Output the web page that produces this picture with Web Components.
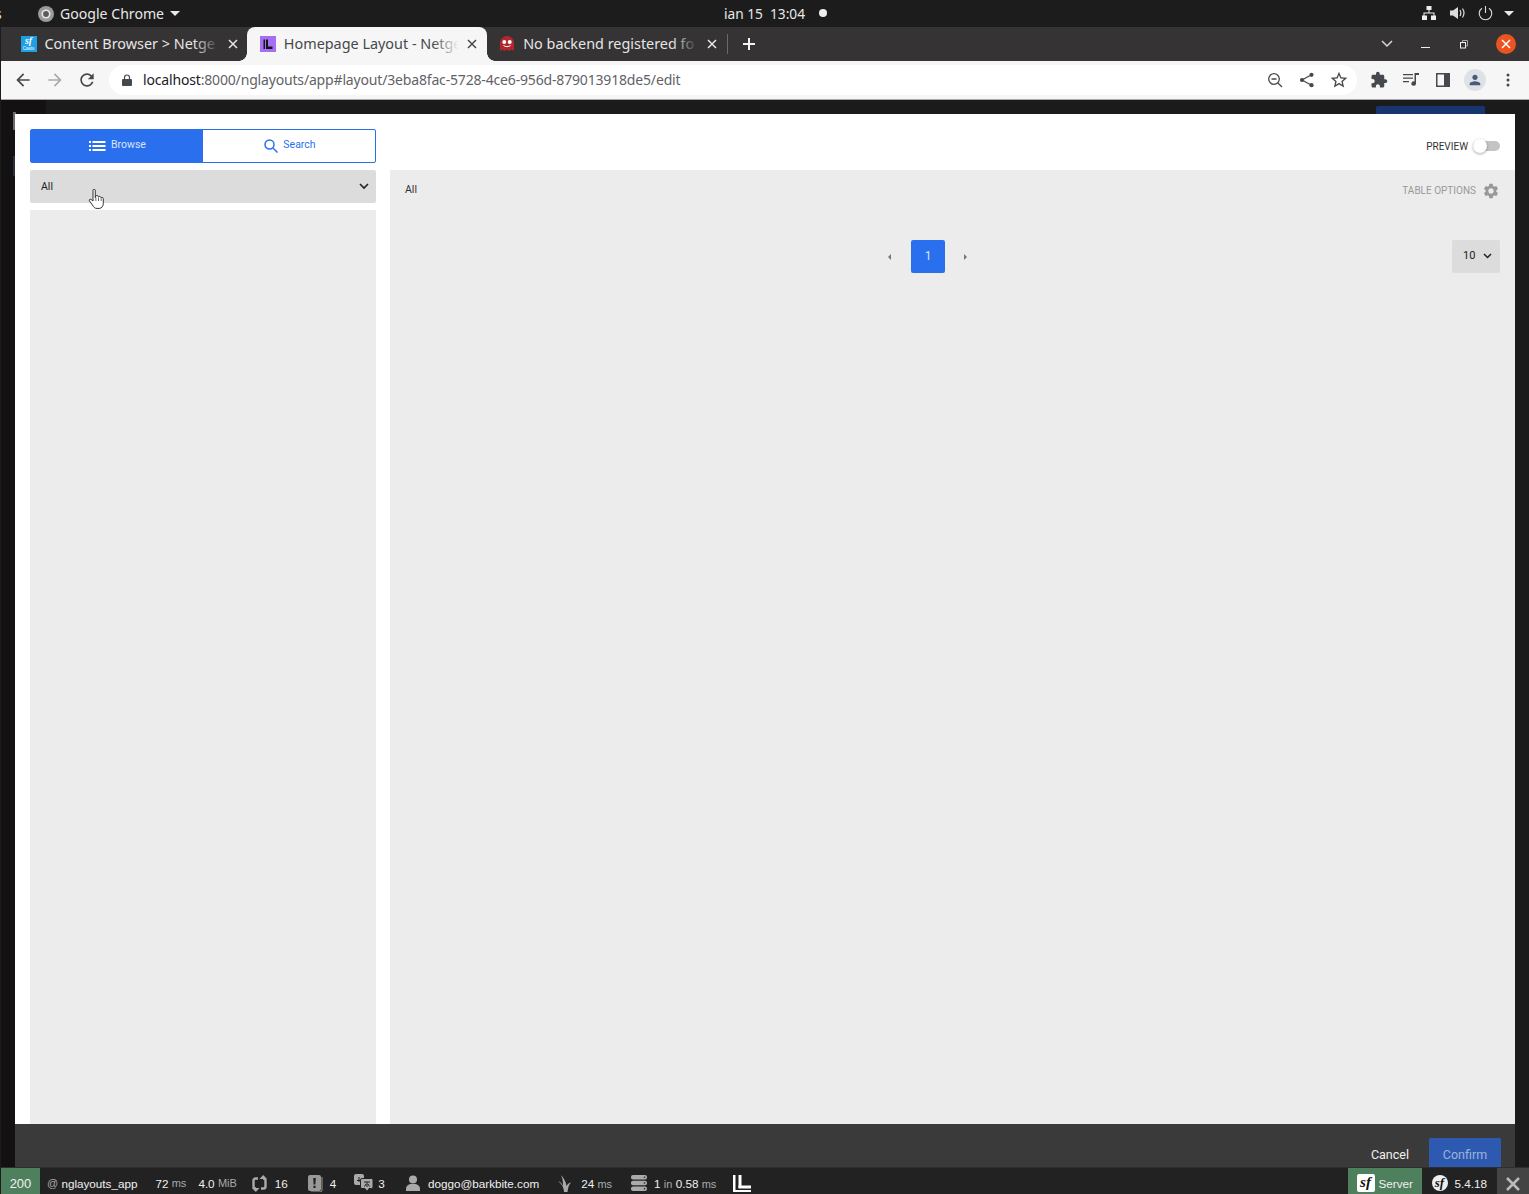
<!DOCTYPE html>
<html>
<head>
<meta charset="utf-8">
<title>Homepage Layout</title>
<style>
    html, body { margin:0; padding:0; background:#1c1c1c; }
    body { width:1529px; height:1194px; overflow:hidden; }
    #app { display:flex; flex-direction:column; height:1194px; }
</style>
</head>
<body>
<div id="app">
    <os-bar></os-bar>
    <tab-strip>
        <browser-tab label="Content Browser &gt; Netge"><sf-casts-icon slot="icon"></sf-casts-icon></browser-tab>
        <browser-tab label="Homepage Layout - Netge" active><ngl-icon slot="icon"></ngl-icon></browser-tab>
        <browser-tab label="No backend registered fo"><ghost-icon slot="icon"></ghost-icon></browser-tab>
    </tab-strip>
    <browser-toolbar></browser-toolbar>
    <page-area>
        <cb-modal></cb-modal>
    </page-area>
    <sf-toolbar></sf-toolbar>
</div>

<script>
// shell of the desktop: gnome top bar
var osTemplate = document.createElement('template');
osTemplate.innerHTML = `
<style>
    :host { display:flex; align-items:center; height:27px; flex:none; background:#1c1c1c; color:#e8e8e8;
        font:14px "Noto Sans", sans-serif; position:relative; overflow:hidden; }
    #act { position:absolute; left:-5px; top:4px; }
    #chrome { display:flex; align-items:center; margin-left:38px; }
    #name { margin-left:6px; font-size:14.100px; }
    .caret { width:0; height:0; border:5px solid transparent; border-top-color:#e8e8e8; border-bottom:0; }
    #clock { position:absolute; left:724px; top:4px; font-size:13.700px; white-space:pre; }
    #dot { position:absolute; left:819px; top:9px; width:8px; height:8px; border-radius:50%; background:#eee; }
    #tray { position:absolute; left:1421px; top:5px; display:flex; align-items:center; }
</style>
<div id="act">s</div>
<div id="chrome">
    <svg width="16" height="16" viewBox="0 0 16 16"><circle cx="8" cy="8" r="8" fill="#9a9a9a"/><circle cx="8" cy="8" r="4.600" fill="#e6e6e6"/><circle cx="8" cy="8" r="2.900" fill="#5b5b5b"/></svg>
    <span id="name">Google Chrome</span>
    <span class="caret" style="margin-left:6px"></span>
</div>
<div id="clock">ian 15  13:04</div>
<div id="dot"></div>
<div id="tray">
    <svg width="16" height="16" viewBox="0 0 16 16" fill="#eee"><rect x="5.500" y="1" width="5" height="4"/><rect x="1" y="10.500" width="5" height="4.500"/><rect x="10" y="10.500" width="5" height="4.500"/><path d="M7.500 5h1v2.500h5V11h-1V8.500h-9V11h-1V7.500h5z"/></svg>
    <svg style="margin-left:13px" width="15" height="16" viewBox="0 0 15 16" fill="#ddd"><path d="M0 5.500h3L8 2v12L3 10.500H0z"/><path d="M10 5c1 1.800 1 4.200 0 6M12.500 3.500c1.800 2.700 1.800 6.300 0 9" fill="none" stroke="#ddd" stroke-width="1.200"/></svg>
    <svg style="margin-left:13px" width="15" height="16" viewBox="0 0 15 16" fill="none" stroke="#ddd" stroke-width="1.100"><path d="M4 3.200a6.300 6.300 0 1 0 7 0"/><path d="M7.500 1v7"/></svg>
    <span class="caret" style="margin-left:11px"></span>
</div>
`;
class OsBar extends HTMLElement {
    constructor(){
        super();
        this.attachShadow({mode:"open"});
    }
    connectedCallback(){
        this.shadowRoot.appendChild(osTemplate.content.cloneNode(true));
    }
}
customElements.define("os-bar", OsBar);

// tab strip
var stripTemplate = document.createElement('template');
stripTemplate.innerHTML = `
<style>
    :host { display:flex; align-items:flex-end; height:34px; flex:none; background:#353334; margin-left:1px; padding-left:7px; position:relative; }
    #sep { width:1px; height:20px; background:#6a6869; align-self:center; flex:none; margin-left:1px; }
    #plus { margin-left:14px; align-self:center; display:flex; }
    #controls { position:absolute; top:0; left:1378px; height:34px; display:flex; align-items:center; }
    #close { position:absolute; left:117px; top:7px; width:20px; height:20px; border-radius:50%; background:#e95420; display:flex; align-items:center; justify-content:center; }
</style>
<slot></slot>
<div id="sep"></div>
<div id="plus"><svg width="14" height="14" viewBox="0 0 14 14"><path d="M6 1h2v5h5v2H8v5H6V8H1V6h5z" fill="#f2f2f2"/></svg></div>
<div id="controls">
    <svg width="16" height="10" viewBox="0 0 16 10" fill="none" stroke="#d8d8d8" stroke-width="1.500"><path d="M3 2l5 5 5-5"/></svg>
    <svg style="margin-left:26px" width="9" height="10" viewBox="0 0 9 10" fill="#eee"><rect y="8" width="9" height="1"/></svg>
    <svg style="margin-left:30px" width="8" height="9" viewBox="0 0 8 9" fill="none" stroke="#eee"><rect x=".5" y="2.500" width="5" height="5.500"/><path d="M2.500 2V.5h5V6H6" stroke="#aaa"/></svg>
    <div id="close"><svg width="10" height="10" viewBox="0 0 10 10" stroke="#fff" stroke-width="1.500"><path d="M1 1l8 8M9 1l-8 8"/></svg></div>
</div>
`;
class TabStrip extends HTMLElement {
    constructor(){
        super();
        this.attachShadow({mode:"open"});
    }
    connectedCallback(){
        this.shadowRoot.appendChild(stripTemplate.content.cloneNode(true));
    }
}
customElements.define("tab-strip", TabStrip);

var tabTemplate = document.createElement('template');
tabTemplate.innerHTML = `
<style>
    :host { display:flex; align-items:center; width:239.330px; height:34px; flex:none; position:relative; color:#e6e6e6;
        font:14.400px "Noto Sans", sans-serif; box-sizing:border-box; padding-left:12.500px; --fade:#353334; }
    :host([active]) { background:#f6f6f6; color:#45484c; border-radius:8px 8px 0 0; --fade:#f6f6f6; }
    :host([active])::before, :host([active])::after { content:""; position:absolute; bottom:0; width:8px; height:8px; background:radial-gradient(circle at 0 0, transparent 7.500px, #f6f6f6 8px); }
    :host([active])::before { left:-8px; }
    :host([active])::after { right:-8px; transform:scaleX(-1); }
    #fav { width:16px; height:16px; flex:none; display:flex; }
    #title { margin-left:8px; margin-top:-2px; width:175px; overflow:hidden; white-space:nowrap; position:relative; flex:none; }
    #title::after { content:""; position:absolute; right:0; top:0; bottom:0; width:26px; background:linear-gradient(90deg, transparent, var(--fade)); }
    #x { position:absolute; left:220px; top:12px; display:flex; }
    :host([active]) path { stroke:#45484c; }
</style>
<div id="fav"><slot name="icon"></slot></div>
<div id="title"></div>
<div id="x"><svg width="10" height="10" viewBox="0 0 10 10"><path d="M1 1l8 8M9 1l-8 8" stroke="#e8e8e8" stroke-width="1.500"/></svg></div>
`;
class BrowserTab extends HTMLElement {
    constructor(){
        super();
        this.attachShadow({mode:"open"});
    }
    connectedCallback(){
        this.shadowRoot.appendChild(tabTemplate.content.cloneNode(true));
        this.shadowRoot.getElementById("title").textContent = this.getAttribute("label");
    }
}
customElements.define("browser-tab", BrowserTab);

// small favicons
class SfCastsIcon extends HTMLElement {
    constructor(){
        super();
        this.attachShadow({mode:"open"}).innerHTML = `
        <style>
            :host { display:block; width:16px; height:16px; background:#1d9fe4; color:#fff; text-align:center; overflow:hidden; }
            i { display:block; font:italic bold 10px/10px "Liberation Serif", serif; }
            b { display:block; font:4.500px/5px "Liberation Sans", sans-serif; }
        </style>
        <i>sf</i><b>Casts</b>`;
    }
}
customElements.define("sf-casts-icon", SfCastsIcon);

class NglIcon extends HTMLElement {
    constructor(){
        super();
        this.attachShadow({mode:"open"}).innerHTML = `
        <style>:host { display:block; width:16px; height:16px; }</style>
        <svg width="16" height="16" viewBox="0 0 16 16"><rect width="16" height="16" fill="#a56ef5"/><path d="M3.500 3.500H5V13H3.500zM6 3.500h2v7h4.500V13H6z" fill="#161616"/></svg>`;
    }
}
customElements.define("ngl-icon", NglIcon);

class GhostIcon extends HTMLElement {
    constructor(){
        super();
        this.attachShadow({mode:"open"}).innerHTML = `
        <style>:host { display:block; width:16px; height:16px; }</style>
        <svg width="16" height="16" viewBox="0 0 16 16"><path d="M1 7a7 7 0 0 1 14 0v8l-2.300-1.500L10.300 15 8 13.500 5.700 15l-2.400-1.500L1 15z" fill="#b3262e"/><circle cx="5.300" cy="6" r="2" fill="#fff"/><circle cx="10.700" cy="6" r="2" fill="#fff"/><path d="M4.500 9.500c2 1.500 5 1.500 7 0" stroke="#fff" fill="none"/></svg>`;
    }
}
customElements.define("ghost-icon", GhostIcon);

// address bar row
var toolbarTemplate = document.createElement('template');
toolbarTemplate.innerHTML = `
<style>
    :host { display:flex; align-items:center; height:38px; flex:none; background:#f6f6f6; border-bottom:1px solid #a8a8a8; margin-left:1px; box-sizing:content-box; }
    .nav { width:20px; height:20px; display:flex; flex:none; }
    svg { display:block; }
    #omni { margin-left:12px; width:1248px; height:30px; background:#fff; border-radius:15px; display:flex; align-items:center; flex:none; box-sizing:border-box; padding-left:12px; }
    #url { margin-left:10px; font:14px "Noto Sans", sans-serif; letter-spacing:-.167px; color:#5f6368; white-space:nowrap; width:1127px; padding-bottom:2px; flex:none; }
    #url b { font-weight:400; color:#202124; }
    #omni svg { flex:none; }
    #ext { display:flex; align-items:center; margin-left:13px; }
    #avatar { width:22px; height:22px; border-radius:50%; background:#dee1e6; display:flex; align-items:center; justify-content:center; margin-left:14px; }
</style>
<div class="nav" style="margin-left:12px"><svg width="20" height="20" viewBox="0 0 24 24" fill="#45484c"><path d="M20 11H7.830l5.590-5.590L12 4l-8 8 8 8 1.410-1.410L7.830 13H20v-2z"/></svg></div>
<div class="nav" style="margin-left:12px"><svg width="20" height="20" viewBox="0 0 24 24" fill="#a9abad"><path d="M4 11h12.170l-5.590-5.590L12 4l8 8-8 8-1.410-1.410L16.170 13H4v-2z"/></svg></div>
<div class="nav" style="margin-left:12px"><svg width="20" height="20" viewBox="0 0 24 24" fill="#45484c"><path d="M17.650 6.350C16.200 4.900 14.210 4 12 4c-4.420 0-7.990 3.580-7.990 8s3.570 8 7.990 8c3.730 0 6.840-2.550 7.730-6h-2.080c-.82 2.330-3.040 4-5.650 4-3.310 0-6-2.690-6-6s2.690-6 6-6c1.660 0 3.140.69 4.220 1.780L13 11h7V4l-2.350 2.350z"/></svg></div>
<div id="omni">
    <svg width="12" height="12" viewBox="0 0 12 12" fill="#45484c"><path d="M2 5h8a1 1 0 0 1 1 1v5a1 1 0 0 1-1 1H2a1 1 0 0 1-1-1V6a1 1 0 0 1 1-1z"/><path d="M3.500 5V3.500a2.500 2.500 0 0 1 5 0V5" fill="none" stroke="#45484c" stroke-width="1.200"/></svg>
    <div id="url"><b>localhost</b>:8000/nglayouts/app#layout/3eba8fac-5728-4ce6-956d-879013918de5/edit</div>
    <svg style="margin-left:-3px" width="16" height="16" viewBox="0 0 16 16" fill="none" stroke="#45484c" stroke-width="1.300"><circle cx="7" cy="7" r="5.300"/><path d="M4.500 7h5M11 11l4 4"/></svg>
    <svg style="margin-left:16px" width="16" height="16" viewBox="0 0 16 16" fill="#45484c"><circle cx="12.500" cy="2.800" r="2.100"/><circle cx="3" cy="8" r="2.100"/><circle cx="12.500" cy="13.200" r="2.100"/><path d="M3 8l9.500-5.200M3 8l9.500 5.200" stroke="#45484c" stroke-width="1.300"/></svg>
    <svg style="margin-left:14px" width="20" height="20" viewBox="0 0 24 24" fill="#45484c"><path d="M22 9.240l-7.190-.62L12 2 9.190 8.630 2 9.240l5.460 4.730L5.820 21 12 17.270 18.180 21l-1.630-7.030L22 9.240zM12 15.400l-3.760 2.270 1-4.280-3.320-2.880 4.380-.38L12 6.100l1.710 4.040 4.380.38-3.320 2.880 1 4.280L12 15.400z"/></svg>
</div>
<div id="ext">
    <svg width="18" height="18" viewBox="0 0 24 24" fill="#45484c"><path d="M20.500 11H19V7c0-1.100-.9-2-2-2h-4V3.500C13 2.120 11.880 1 10.500 1S8 2.120 8 3.500V5H4c-1.100 0-1.990.9-1.990 2v3.800H3.500c1.490 0 2.700 1.210 2.700 2.700s-1.210 2.700-2.700 2.700H2V20c0 1.100.9 2 2 2h3.800v-1.500c0-1.490 1.210-2.700 2.700-2.700 1.490 0 2.700 1.210 2.700 2.700V22H17c1.100 0 2-.9 2-2v-4h1.500c1.380 0 2.500-1.120 2.500-2.500S21.880 11 20.500 11z"/></svg>
    <svg style="margin-left:15px" width="16" height="14" viewBox="0 0 16 14" fill="#45484c"><path d="M0 1h10v1.300H0zM0 4.500h10v1.300H0zM0 8h6v1.300H0zM11.500 0H16v2h-3v8.500a2.300 2.300 0 1 1-1.500-2.100z"/></svg>
    <svg style="margin-left:17px" width="14" height="14" viewBox="0 0 14 14"><rect width="14" height="14" fill="#45484c"/><rect x="1.500" y="1.500" width="6.500" height="11" fill="#f6f6f6"/></svg>
    <div id="avatar"><svg width="16" height="16" viewBox="0 0 24 24" fill="#4a5a78"><path d="M12 12c2.210 0 4-1.790 4-4s-1.790-4-4-4-4 1.790-4 4 1.790 4 4 4zm0 2c-2.670 0-8 1.340-8 4v2h16v-2c0-2.660-5.330-4-8-4z"/></svg></div>
    <svg style="margin-left:20px" width="4" height="14" viewBox="0 0 4 14" fill="#45484c"><circle cx="2" cy="2" r="1.500"/><circle cx="2" cy="7" r="1.500"/><circle cx="2" cy="12" r="1.500"/></svg>
</div>
`;
class BrowserToolbar extends HTMLElement {
    constructor(){
        super();
        this.attachShadow({mode:"open"});
    }
    connectedCallback(){
        this.shadowRoot.appendChild(toolbarTemplate.content.cloneNode(true));
    }
}
customElements.define("browser-toolbar", BrowserToolbar);

// dimmed page behind the modal, only a few bits of it show through
var pageTemplate = document.createElement('template');
pageTemplate.innerHTML = `
<style>
    :host { display:flex; flex:1; min-height:0; position:relative; background:#1b1b1b; padding:14px 14px 0 14px; margin-left:1px; overflow:hidden; }
    #side { position:absolute; left:0; top:0; bottom:0; width:45px; background:#141112; }
    #back-btn { position:absolute; left:1375px; top:6px; width:109px; height:10px; background:#17366f; border-radius:2px; }
    #back-bar { position:absolute; left:12px; top:12px; width:3px; height:18px; background:#6b6b6b; }
    #back-box { position:absolute; left:12px; top:56px; width:2px; height:20px; background:#2a2f38; }
    ::slotted(*) { position:relative; }
</style>
<div id="side"></div>
<div id="back-btn"></div>
<div id="back-bar"></div>
<div id="back-box"></div>
<slot></slot>
`;
class PageArea extends HTMLElement {
    constructor(){
        super();
        this.attachShadow({mode:"open"});
    }
    connectedCallback(){
        this.shadowRoot.appendChild(pageTemplate.content.cloneNode(true));
    }
}
customElements.define("page-area", PageArea);

// content browser modal
var modalTemplate = document.createElement('template');
modalTemplate.innerHTML = `
<style>
    :host { display:flex; flex-direction:column; width:1500px; background:#fff; font:11px Roboto, sans-serif; color:#222; }
    #body { display:flex; flex:1; min-height:0; padding:15px 0 0 15px; gap:14px; }
    #left { width:346px; flex:none; display:flex; flex-direction:column; gap:7px; }
    #tree { flex:1; background:#ececec; }
    #right { flex:1; display:flex; flex-direction:column; min-width:0; }
    #top { height:41px; flex:none; display:flex; justify-content:flex-end; align-items:flex-start; padding:10px 15px 0 0; box-sizing:border-box; }
    #panel { flex:1; background:#ececec; padding:0 15px; display:flex; flex-direction:column; }
    #head { display:flex; justify-content:space-between; align-items:center; height:41px; flex:none; color:#333; }
    #head span { font-size:10.500px; margin-top:-2px; }
    #opts { display:flex; align-items:center; color:#999; font-size:10px; }
    #opts svg { margin-left:6px; }
    #foot { height:43px; flex:none; background:#3a3a3a; display:flex; justify-content:flex-end; align-items:flex-start; padding:14px 14px 0 0; box-sizing:border-box; overflow:hidden; color:#f2f2f2; font-size:12.500px; }
    #cancel { margin-top:9px; margin-right:20px; }
    #confirm { width:72px; height:40px; background:#2d5ab0; color:#9db3dc; border-radius:2px; text-align:center; padding-top:9px; box-sizing:border-box; }
</style>
<div id="body">
    <div id="left">
        <cb-tabs></cb-tabs>
        <cb-select></cb-select>
        <div id="tree"></div>
    </div>
    <div id="right">
        <div id="top"><cb-toggle>PREVIEW</cb-toggle></div>
        <div id="panel">
            <div id="head">
                <span>All</span>
                <div id="opts">TABLE OPTIONS
                    <svg width="18" height="18" viewBox="0 0 24 24" fill="#999"><path d="M19.140 12.940c.04-.3.06-.61.06-.94 0-.32-.02-.64-.07-.94l2.030-1.580c.18-.14.23-.41.12-.61l-1.920-3.320c-.12-.22-.37-.29-.59-.22l-2.390.96c-.5-.38-1.030-.7-1.620-.94l-.36-2.540c-.04-.24-.24-.41-.48-.41h-3.840c-.24 0-.43.17-.47.41l-.36 2.540c-.59.24-1.130.57-1.620.94l-2.390-.96c-.22-.08-.47 0-.59.22L2.740 8.870c-.12.21-.08.47.12.61l2.030 1.580c-.05.3-.09.63-.09.94s.02.64.07.94l-2.030 1.580c-.18.14-.23.41-.12.61l1.920 3.320c.12.22.37.29.59.22l2.390-.96c.5.38 1.030.7 1.620.94l.36 2.540c.05.24.24.41.48.41h3.840c.24 0 .44-.17.47-.41l.36-2.540c.59-.24 1.130-.56 1.620-.94l2.390.96c.22.08.47 0 .59-.22l1.920-3.320c.12-.22.07-.47-.12-.61l-2.010-1.580zM12 15.600c-1.980 0-3.600-1.620-3.600-3.600s1.620-3.600 3.600-3.600 3.600 1.620 3.600 3.600-1.620 3.600-3.600 3.600z"/></svg>
                </div>
            </div>
            <cb-pager></cb-pager>
        </div>
    </div>
</div>
<div id="foot">
    <span id="cancel">Cancel</span>
    <div id="confirm">Confirm</div>
</div>
`;
class CbModal extends HTMLElement {
    constructor(){
        super();
        this.attachShadow({mode:"open"});
    }
    connectedCallback(){
        this.shadowRoot.appendChild(modalTemplate.content.cloneNode(true));
    }
}
customElements.define("cb-modal", CbModal);

var cbTabsTemplate = document.createElement('template');
cbTabsTemplate.innerHTML = `
<style>
    :host { display:flex; height:34px; flex:none; border:1px solid #2a70ee; border-radius:2px; box-sizing:border-box; font:10.500px Roboto, sans-serif; color:#2a70ee; }
    div { flex:1; display:flex; align-items:center; justify-content:center; padding-bottom:4px; box-sizing:border-box; }
    #browse { background:#2a70ee; color:#d8e4fb; flex:none; width:172px; padding-left:1px; }
    #search { padding-left:2px; }
    svg { margin-right:5px; margin-top:4px; }
</style>
<div id="browse">
    <svg width="17" height="12" viewBox="0 0 17 12" fill="#fff"><rect y="1" width="2" height="2"/><rect y="5" width="2" height="2"/><rect y="9" width="2" height="2"/><rect x="3.500" y="1" width="13" height="2"/><rect x="3.500" y="5" width="13" height="2"/><rect x="3.500" y="9" width="13" height="2"/></svg>
    Browse
</div>
<div id="search">
    <svg width="14" height="14" viewBox="0 0 14 14" fill="none" stroke="#2a70ee" stroke-width="1.500"><circle cx="5.500" cy="5.500" r="4.500"/><path d="M9 9l4.500 4.500"/></svg>
    Search
</div>
`;
class CbTabs extends HTMLElement {
    constructor(){
        super();
        this.attachShadow({mode:"open"});
    }
    connectedCallback(){
        this.shadowRoot.appendChild(cbTabsTemplate.content.cloneNode(true));
    }
}
customElements.define("cb-tabs", CbTabs);

var selectTemplate = document.createElement('template');
selectTemplate.innerHTML = `
<style>
    :host { display:flex; align-items:center; justify-content:space-between; height:33px; flex:none; background:#dcdcdc; border-radius:2px; padding:0 7px 0 11px; box-sizing:border-box; font:10.500px Roboto, sans-serif; color:#222; position:relative; }
    #hand { position:absolute; left:58px; top:19px; }
</style>
<span>All</span>
<svg width="10" height="7" viewBox="0 0 10 7" fill="none" stroke="#222" stroke-width="1.600"><path d="M1 1l4 4 4-4"/></svg>
<svg id="hand" width="18" height="20" viewBox="1 .5 14 17.500"><path d="M4.500 1.500c0-1 2-1 2 0V8l.5-1.500c.8-.6 2-.5 2 .5l.2.500c.6-.8 2-.6 2 .3l.3.300c.6-.5 2-.3 2 .7v4.500c0 2-1.300 4.200-3.500 4.200H8c-2 0-2.800-1-4-3L1.500 11c-.8-1 .3-2 1.300-1.400L4.500 11z" fill="#fff" stroke="#222" stroke-width=".8"/><path d="M7 8v3M9.300 8v3M11.600 8.500V11" stroke="#222" stroke-width=".6"/></svg>
`;
class CbSelect extends HTMLElement {
    constructor(){
        super();
        this.attachShadow({mode:"open"});
    }
    connectedCallback(){
        this.shadowRoot.appendChild(selectTemplate.content.cloneNode(true));
    }
}
customElements.define("cb-select", CbSelect);

var toggleTemplate = document.createElement('template');
toggleTemplate.innerHTML = `
<style>
    :host { display:flex; align-items:center; font:400 10px Roboto, sans-serif; color:#333; height:14px; }
    #track { margin-left:5px; width:27px; height:10px; border-radius:5px; background:#c4c4c4; position:relative; }
    #knob { position:absolute; left:0; top:-2px; width:14px; height:14px; border-radius:50%; background:#fff; box-shadow:0 1px 3px rgba(0,0,0,.35); }
</style>
<slot></slot>
<div id="track"><div id="knob"></div></div>
`;
class CbToggle extends HTMLElement {
    constructor(){
        super();
        this.attachShadow({mode:"open"});
    }
    connectedCallback(){
        this.shadowRoot.appendChild(toggleTemplate.content.cloneNode(true));
    }
}
customElements.define("cb-toggle", CbToggle);

var pagerTemplate = document.createElement('template');
pagerTemplate.innerHTML = `
<style>
    :host { display:block; position:relative; height:33px; margin-top:29px; flex:none; font:12px Roboto, sans-serif; }
    #pages { display:flex; align-items:center; height:33px; margin-left:483px; width:94px; }
    .arrow { width:0; height:0; border:3px solid transparent; }
    #prev { border-right-color:#777; border-left:0; margin-right:20px; }
    #next { border-left-color:#777; border-right:0; margin-left:19px; }
    #cur { width:34px; height:33px; background:#2a70ee; color:#d8e4fb; border-radius:2px; display:flex; align-items:center; justify-content:center; padding-bottom:2px; box-sizing:border-box; }
    #size { position:absolute; right:0; top:0; width:48px; height:33px; background:#dcdcdc; border-radius:2px; display:flex; align-items:center; padding-left:11px; box-sizing:border-box; color:#222; font-size:11px; padding-bottom:2px; }
    #size svg { margin-left:8px; margin-top:1px; }
</style>
<div id="pages">
    <div class="arrow" id="prev"></div>
    <div id="cur">1</div>
    <div class="arrow" id="next"></div>
</div>
<div id="size">10
    <svg width="9" height="6" viewBox="0 0 9 6" fill="none" stroke="#222" stroke-width="1.500"><path d="M1 1l3.500 3.500L8 1"/></svg>
</div>
`;
class CbPager extends HTMLElement {
    constructor(){
        super();
        this.attachShadow({mode:"open"});
    }
    connectedCallback(){
        this.shadowRoot.appendChild(pagerTemplate.content.cloneNode(true));
    }
}
customElements.define("cb-pager", CbPager);

// symfony debug toolbar
var sfTemplate = document.createElement('template');
sfTemplate.innerHTML = `
<style>
    :host { display:flex; height:27px; flex:none; background:#222; border-top:1px solid #2e2e2e; box-sizing:border-box; margin-left:1px; font:11.700px "Liberation Sans", sans-serif; color:#f0f0f0; overflow:hidden; }
    u { text-decoration:none; color:#aaa; font-size:11px; }
    .it { display:flex; align-items:center; height:100%; flex:none; white-space:pre; padding-top:4px; box-sizing:border-box; }
    svg { flex:none; display:block; }
    #status { width:39px; background:#4f805d; justify-content:center; font-size:13px; }
    #server { background:#4f805d; width:74px; margin-left:auto; padding-left:9px; }
    #sf-box { width:18px; height:18px; background:#fff; border-radius:2px; color:#111; text-align:center; font:italic bold 15px/17px "Liberation Serif", serif; margin-right:4px; }
    #sf-round { width:16px; height:16px; border-radius:50%; background:#eee; color:#111; text-align:center; font:italic bold 13px/15px "Liberation Serif", serif; margin-right:7px; margin-left:10px; }
    #kill { width:32px; background:#444; margin-left:10px; justify-content:center; padding-top:5px; }
    #logo { align-items:flex-start; padding-top:7px; }
</style>
<div class="it" id="status">200</div>
<div class="it" style="margin-left:7px"><u>@</u> nglayouts_app</div>
<div class="it" style="margin-left:18px">72 <u>ms</u></div>
<div class="it" style="margin-left:12px">4.0 <u>MiB</u></div>
<div class="it" style="margin-left:14px">
    <svg width="17" height="17" viewBox="0 0 17 17" fill="none" stroke="#aaa" stroke-width="2.400"><path d="M7 3.500H4.500a2 2 0 0 0-2 2v6a2 2 0 0 0 2 2h.5M10 13.500h2.500a2 2 0 0 0 2-2v-6a2 2 0 0 0-2-2H12"/><path d="M12.200 0l3.800 4h-7.500zM4.800 17L1 13h7.500z" fill="#aaa" stroke="none"/></svg>
    <span style="margin-left:7px">16</span>
</div>
<div class="it" style="margin-left:20px">
    <svg width="15" height="17" viewBox="0 0 15 17"><path d="M0 2a2 2 0 0 1 2-2h9a2 2 0 0 1 2 2v12a2 2 0 0 1-2 2H2a2 2 0 0 1-2-2z" fill="#999"/><path d="M14 2v13a2 2 0 0 1-2 2H3" fill="none" stroke="#999"/><path d="M5.200 3h2.600L7.400 9.500H5.600zM5.400 10.800h2.200V13H5.400z" fill="#222"/></svg>
    <span style="margin-left:7px">4</span>
</div>
<div class="it" style="margin-left:18px">
    <svg width="19" height="18" viewBox="0 0 19 18"><path d="M2 0h6a2 2 0 0 1 2 2v7a2 2 0 0 1-2 2H2a2 2 0 0 1-2-2V2a2 2 0 0 1 2-2z" fill="#aaa"/><path d="M3 6.500h3.500M5 3v5" stroke="#222" fill="none"/><path d="M8 4.500h9.500a1.500 1.500 0 0 1 1.500 1.500v7a1.500 1.500 0 0 1-1.500 1.500H15l-2 3-2-3H8A1.500 1.500 0 0 1 6.500 13V6A1.500 1.500 0 0 1 8 4.500z" fill="#aaa" stroke="#222"/><path d="M10 8h6M13 8v5M10.500 12.500l1.500-2.500M15.500 12.500L14 10" stroke="#222" fill="none"/></svg>
    <span style="margin-left:5px">3</span>
</div>
<div class="it" style="margin-left:21px">
    <svg width="14" height="16" viewBox="0 0 14 16" fill="#aaa"><circle cx="7" cy="4.500" r="4"/><path d="M0 16v-2.500c0-2.500 2.500-4 4.500-4.500h5c2 .5 4.500 2 4.500 4.500V16z"/></svg>
    <span style="margin-left:8px">doggo@barkbite.com</span>
</div>
<div class="it" style="margin-left:19px">
    <svg width="13" height="17" viewBox="0 0 13 17" fill="#aaa"><path d="M0 6c3 1 4.500 3 5 5.500C5 8 5 4 3 0c3 3 5 7 5.500 11 .7-1.500 2-3 4.500-3.500-2 2-3 5-3.500 9.500H6C6 13 4 9 0 6z"/></svg>
    <span style="margin-left:10px">24 <u>ms</u></span>
</div>
<div class="it" style="margin-left:19px">
    <svg width="16" height="16" viewBox="0 0 16 16" fill="#aaa"><rect y="0" width="16" height="4.500" rx="2"/><rect y="5.700" width="16" height="4.500" rx="2"/><rect y="11.400" width="16" height="4.500" rx="2"/><circle cx="13.500" cy="2.200" r=".8" fill="#222"/><circle cx="13.500" cy="8" r=".8" fill="#222"/><circle cx="13.500" cy="13.700" r=".8" fill="#222"/></svg>
    <span style="margin-left:7px">1 <u>in</u> 0.58 <u>ms</u></span>
</div>
<div class="it" id="logo" style="margin-left:17px">
    <svg width="18" height="17" viewBox="0 0 18 17" fill="#fff"><rect width="2.500" height="17"/><rect y="15" width="18" height="2"/><rect x="5.500" width="3" height="13"/><rect x="5.500" y="10.500" width="12.500" height="3"/></svg>
</div>
<div class="it" id="server"><div id="sf-box">sf</div>Server</div>
<div class="it"><div id="sf-round">sf</div>5.4.18</div>
<div class="it" id="kill"><svg width="14" height="14" viewBox="0 0 14 14" stroke="#bbb" stroke-width="2.500"><path d="M1 1l12 12M13 1L1 13"/></svg></div>
`;
class SfToolbar extends HTMLElement {
    constructor(){
        super();
        this.attachShadow({mode:"open"});
    }
    connectedCallback(){
        this.shadowRoot.appendChild(sfTemplate.content.cloneNode(true));
    }
}
customElements.define("sf-toolbar", SfToolbar);
</script>
</body>
</html>
